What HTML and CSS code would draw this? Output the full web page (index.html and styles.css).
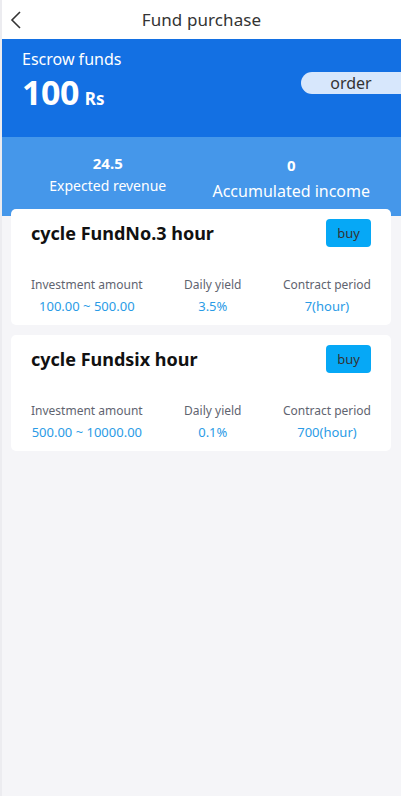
FILE: index.html
```html
<!DOCTYPE html>
<html>
<head>
<meta charset="utf-8">
<link rel="stylesheet" href="styles.css">
</head>
<body>
<div class="page">
  <header class="topbar">
    <svg class="back" width="12" height="20" viewBox="0 0 12 20"><path d="M10 2 L2 10 L10 18" fill="none" stroke="#333" stroke-width="1.6"/></svg>
    <div class="title">Fund purchase</div>
  </header>
  <section class="hero">
    <div class="hero-left">
      <div class="hero-label">Escrow funds</div>
      <div class="hero-amount"><span class="num">100</span><span class="unit">Rs</span></div>
    </div>
    <div class="order">order</div>
  </section>
  <section class="stats">
    <div class="stat">
      <div class="stat-num">24.5</div>
      <div class="stat-label">Expected revenue</div>
    </div>
    <div class="stat stat-right">
      <div class="stat-num">0</div>
      <div class="stat-label big">Accumulated income</div>
    </div>
  </section>
  <main class="list">
    <div class="card">
      <div class="card-head">
        <div class="card-title">cycle FundNo.3 hour</div>
        <div class="buy">buy</div>
      </div>
      <div class="card-grid">
        <div class="cell"><div class="lab">Investment amount</div><div class="val">100.00 ~ 500.00</div></div>
        <div class="cell"><div class="lab">Daily yield</div><div class="val">3.5%</div></div>
        <div class="cell"><div class="lab">Contract period</div><div class="val">7(hour)</div></div>
      </div>
    </div>
    <div class="card">
      <div class="card-head">
        <div class="card-title">cycle Fundsix hour</div>
        <div class="buy">buy</div>
      </div>
      <div class="card-grid">
        <div class="cell"><div class="lab">Investment amount</div><div class="val">500.00 ~ 10000.00</div></div>
        <div class="cell"><div class="lab">Daily yield</div><div class="val">0.1%</div></div>
        <div class="cell"><div class="lab">Contract period</div><div class="val">700(hour)</div></div>
      </div>
    </div>
  </main>
</div>
</body>
</html>
```

FILE: styles.css
```css
* { box-sizing: border-box; }
html, body { margin: 0; padding: 0; }
body {
  font-family: "Noto Sans", "Open Sans", "Liberation Sans", sans-serif;
  background: #f5f5f8;
  width: 401px;
  height: 796px;
  overflow: hidden;
}
.page {
  min-height: 796px;
  border-left: 2px solid #ececf0;
  background: #f5f5f8;
}
.topbar {
  height: 39px;
  background: #fff;
  display: flex;
  align-items: center;
  justify-content: center;
  position: relative;
}
.back { position: absolute; left: 8px; top: 10px; }
.title { font-size: 17px; color: #333; letter-spacing: 0.1px; }
.hero {
  height: 98px;
  background: #1370e3;
  display: flex;
  align-items: center;
  justify-content: space-between;
  padding: 0 0 0 20px;
}
.hero-left { color: #fff; margin-top: -18px; }
.hero-label { font-size: 16px; line-height: 22px; }
.hero-amount { display: flex; align-items: baseline; margin-top: 4px; }
.num { font-size: 34px; font-weight: 700; line-height: 36px; letter-spacing: -0.5px; }
.unit { font-size: 17px; font-weight: 700; margin-left: 6px; }
.order {
  width: 100px;
  height: 22px;
  background: #d7e7fc;
  border-radius: 11px 0 0 11px;
  color: #333;
  font-size: 16px;
  line-height: 22px;
  text-align: center;
  margin-top: -10px;
}
.stats {
  height: 79px;
  background: #4597ea;
  display: flex;
  color: #fff;
  padding-top: 15px;
}
.stat { flex: 1; text-align: center; padding-left: 14px; }
.stat-right { padding-left: 0; padding-right: 18px; }
.stat-num { font-size: 15px; font-weight: 700; line-height: 22px; }
.stat-label { font-size: 14px; line-height: 20px; margin-top: 2px; }
.stat-label.big { font-size: 16px; line-height: 24px; }
.stat-right .stat-num { margin-top: 2px; }
.stat-right .stat-label { margin-top: 3px; }
.list {
  margin-top: -7px;
  padding: 0 10px 0 9px;
  display: flex;
  flex-direction: column;
  gap: 10px;
}
.card {
  background: #fff;
  border-radius: 5px;
  height: 116px;
  padding: 10px 20px 0 20px;
}
.card-head {
  display: flex;
  justify-content: space-between;
  align-items: flex-start;
}
.card-title {
  font-size: 18px;
  font-weight: 700;
  color: #111;
  line-height: 28px;
}
.buy {
  width: 45px;
  height: 28px;
  background: #06a8f6;
  border-radius: 4px;
  color: #333;
  font-size: 13px;
  line-height: 28px;
  text-align: center;
}
.card-grid {
  display: flex;
  justify-content: space-between;
  margin-top: 29px;
}
.cell { text-align: center; }
.lab { font-size: 12px; color: #5f6470; line-height: 18px; }
.val { font-size: 13px; color: #2a9be6; line-height: 18px; margin-top: 3px; }
```
